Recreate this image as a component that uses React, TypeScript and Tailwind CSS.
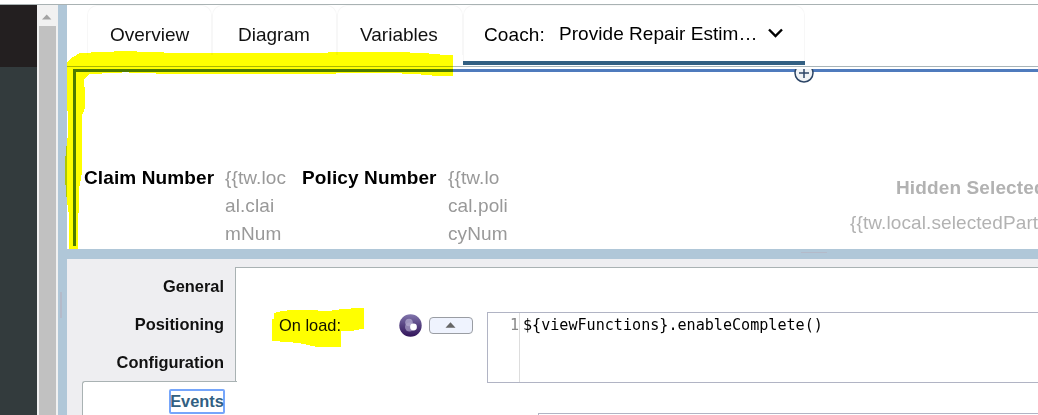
import React from "react";

const tabs = [
  { label: "Overview", cls: "w-[125px] pl-[22px]" },
  { label: "Diagram", cls: "w-[125px] pl-[25px]" },
  { label: "Variables", cls: "w-[126px] pl-[22px]" },
];

function SideScroll() {
  return (
    <aside className="flex shrink-0">
      <div className="flex w-[37px] flex-col bg-[#333b3d]">
        <div className="h-[62px] bg-[#231f20]" />
      </div>
      <div className="flex w-[21px] flex-col items-center bg-[#f1f1f1] pr-px">
        <div className="flex h-[21px] items-center justify-center">
          <svg width="10" height="6" viewBox="0 0 10 6" className="mt-[2px]">
            <path d="M0 5.5 L4.7 0.5 L9.4 5.5Z" fill="#a3a3a3" />
          </svg>
        </div>
        <div className="w-[17px] flex-1 bg-[#c1c1c1]" />
      </div>
      <div className="flex w-[9px] flex-col bg-[#b0c7d8] pl-[2px] pt-[287px]">
        <div className="h-[26px] w-[2px] bg-[#b4bac9]" />
      </div>
    </aside>
  );
}

function TabBar() {
  return (
    <nav className="flex h-[61px] shrink-0 pl-5 text-[19px] leading-[57px] text-[#111]">
      {tabs.map((t) => (
        <div
          key={t.label}
          className={"h-[50px] rounded-t-[10px] border-x border-t border-[#f7f7f7] " + t.cls}
        >
          {t.label}
        </div>
      ))}
      <div className="flex h-[60px] w-[342px] rounded-t-[10px] border-b-4 border-[#325f82] text-black">
        <div className="flex h-[56px] w-full rounded-t-[10px] border-x border-t border-[#f7f7f7] pl-5">
          <span className="w-[75px] tracking-[0.1px]">Coach:</span>
          <span className="w-[208px] leading-[55px] tracking-[0.05px]">Provide Repair Estim…</span>
          <svg width="18" height="12" viewBox="0 0 18 12" className="mt-[21px]" fill="none">
            <path d="M2 2.5 L8.5 9 L15 2.5" stroke="#000" strokeWidth="2.4" />
          </svg>
        </div>
      </div>
    </nav>
  );
}

function Canvas() {
  return (
    <section className="relative flex h-[182px] shrink-0 pl-[6px] pt-[2px]">
      <div className="flex h-[177px] w-[965px] shrink-0 overflow-hidden border-l-[3px] border-t-[3px] border-[#4f7bbd] pl-2 pt-[92px] text-[19px] leading-7 text-[#999]">
        <div className="w-[141px] shrink-0 font-bold tracking-[0.12px] text-black">Claim Number</div>
        <div className="w-[78px] shrink-0 tracking-[0.1px]">{"{{tw.loc"}<br />al.clai<br />mNum</div>
        <div className="-ml-px w-[146px] shrink-0 font-bold tracking-[0.12px] text-black">Policy Number</div>
        <div className="w-[402px] shrink-0 tracking-[0.1px]">{"{{tw.lo"}<br />cal.poli<br />cyNum</div>
        <div className="shrink-0 whitespace-nowrap text-[#b2b2b2]">
          <div className="pl-[46px] pt-[10px] font-bold tracking-[0.12px]">Hidden Selected</div>
          <div className="pt-[7px] tracking-[0.1px]">{"{{tw.local.selectedPart"}</div>
        </div>
      </div>
      <svg className="absolute left-[727px] top-[2px]" width="20" height="14" viewBox="0 0 20 14" fill="none">
        <circle cx="10" cy="4" r="9" fill="#f0f3f6" stroke="#2c4566" strokeWidth="1.5" />
        <path d="M5 4H15M10 -1V9" stroke="#2c4566" strokeWidth="1.5" />
      </svg>
    </section>
  );
}

function Properties() {
  return (
    <section className="flex flex-1 bg-[#eeeef1]">
      <div className="flex w-[168px] shrink-0 flex-col pt-2 text-right text-[16.4px] font-bold leading-[38px] text-[#111]">
        <div className="pr-[11px]">General</div>
        <div className="pr-[11px]">Positioning</div>
        <div className="pr-[11px]">Configuration</div>
        <div className="relative z-10 ml-[15px] -mr-[2px] flex-1 rounded-tl-[3px] border-l border-t border-[#a9b2b3] bg-white pr-3 pt-[7px]">
          <span className="ml-auto flex h-[25px] w-[56px] items-center justify-center rounded-[2px] border-2 border-[#76a6fb] pb-[2px] text-[#325f82]">
            Events
          </span>
        </div>
      </div>
      <div className="mt-2 flex flex-1 border-l border-t border-[#a9b2b3] bg-white">
        <div className="w-[163px] pl-[43px] pt-[43px] text-[16.4px] leading-[28px] text-[#111]">On load:</div>
        <svg width="24" height="24" viewBox="0 0 24 24" className="mt-[46px]">
          <defs>
            <linearGradient id="orb" x1="0" y1="0" x2="0" y2="1">
              <stop offset="0" stopColor="#8276ad" />
              <stop offset="0.5" stopColor="#55417f" />
              <stop offset="1" stopColor="#33155b" />
            </linearGradient>
          </defs>
          <circle cx="11.5" cy="11.5" r="11.2" fill="url(#orb)" />
          <circle cx="10" cy="8.5" r="3.8" fill="#b2a9ce" opacity=".75" />
          <circle cx="10.5" cy="13" r="4.5" fill="#b2a9ce" opacity=".65" />
          <circle cx="14.5" cy="13" r="3.4" fill="#fff" />
        </svg>
        <div className="ml-[6px] mt-[49px] flex h-[17px] w-[44px] items-center justify-center rounded-[4px] border border-[#9a9da3] bg-[#eff3fe]">
          <svg width="11" height="6" viewBox="0 0 11 6" className="mb-[2px] mr-[2px]">
            <path d="M0.5 5.8 L5.5 0.3 L10.5 5.8Z" fill="#666" />
          </svg>
        </div>
        <div className="ml-[14px] mt-[44px] flex flex-1 flex-col">
          <div className="flex h-[71px] border-y border-l border-[#b1b4c4] font-['DejaVu_Sans_Mono',monospace] text-[15.1px] leading-[25px]">
            <div className="w-[32px] border-r border-[#ddd] text-right text-[#888]">1</div>
            <div className="pl-[3px] text-black">{"${viewFunctions}.enableComplete()"}</div>
          </div>
          <div className="ml-[51px] mt-[30px] flex-1 border-l border-t border-[#b1b4c4]" />
        </div>
      </div>
    </section>
  );
}

export default function App() {
  return (
    <div className="relative flex h-[415px] w-[1038px] flex-col overflow-hidden bg-white font-['Liberation_Sans',Arial,sans-serif]">
      <div className="h-[5px] shrink-0 border-b border-[#a9b2b3]" />
      <div className="flex min-h-0 flex-1">
        <SideScroll />
        <main className="flex min-w-0 flex-1 flex-col overflow-hidden">
          <TabBar />
          <div className="h-px shrink-0 bg-[#a9b5b9]" />
          <Canvas />
          <div className="flex h-[10px] shrink-0 bg-[#b0c7d8] pl-[734px] pt-[3px]">
            <div className="h-px w-[26px] bg-[#b4bac9]" />
          </div>
          <Properties />
        </main>
      </div>
      <svg
        className="pointer-events-none absolute left-0 top-0 mix-blend-multiply"
        width="1038"
        height="415"
        viewBox="0 0 1038 415"
        fill="#ff0"
        shapeRendering="crispEdges"
      >
        <path d="M67 63L70 59L80 53L91 53V52H114V51H137V52H164V53H328V52H410V53H429V54H440V55H453V76H432V75H421V74H402V73H336V74H156V73H129V72H122V73H102V74H89L87 76L84 79V87H85V107L83 114H82V173L81 178L79 189V213H78V249H69V216L68 208L67 201L66 192L65 178V162L66 150L68 134V115L67 107Z" />
        <path d="M272 319H274V313L282 311L291 310H318V311H332V310L346 309L355 308H364V329L354 330V331H341V347H317L308 345L298 343L287 342L272 341Z" />
      </svg>
    </div>
  );
}
